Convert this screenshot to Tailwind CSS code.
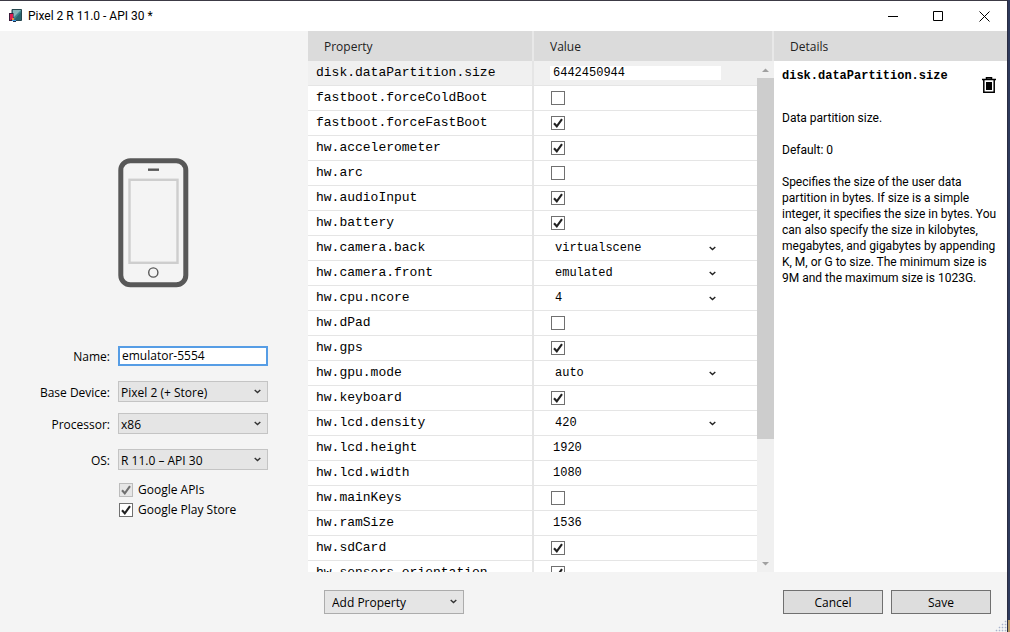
<!DOCTYPE html>
<html lang="en">
<head>
<meta charset="utf-8">
<title>Pixel 2 R 11.0 - API 30 *</title>
<script src="https://cdn.jsdelivr.net/npm/@tailwindcss/browser@4"></script>
</head>
<body class="flex h-screen overflow-hidden bg-[#2f3a5c] font-['Open_Sans','Noto_Sans',sans-serif] text-xs text-black">
<svg class="hidden">
  <symbol id="check" viewBox="0 0 14 14"><path d="M3 7.200 L5.800 10.300 L11 3.200" fill="none" stroke="currentColor" stroke-width="2.100"/></symbol>
  <symbol id="chevron" viewBox="0 0 7 5"><path d="M.7 1 L3.500 3.600 L6.300 1" fill="none" stroke="currentColor" stroke-width="1.400"/></symbol>
</svg>

<div class="flex min-w-0 flex-1 flex-col border-t border-[#3c3a45] bg-[#f4f4f4]">
  <header class="flex h-[30px] shrink-0 items-center bg-white pl-[9px]">
    <svg class="h-[14px] w-[13px]" viewBox="0 0 13 14">
      <path d="M3 .5h9.500v11H3z" fill="#3f858d" stroke="#26474f"/>
      <path d="M4 1h8L5 8H4z" fill="#86b5ba"/>
      <path d="M12 3v8H5z" fill="#2c6670"/>
      <path d="M0 4h4.500v8H0z" fill="#3a1d3b"/>
      <path d="M1 5h3v4L2 11H1z" fill="#e01e50"/>
      <path d="M3 9h2v2H3z" fill="#f08a3c"/>
      <path d="M3 11h4v1H3z" fill="#3e9be0"/>
      <path d="M4 12h3v1H4z" fill="#223049"/>
    </svg>
    <h1 class="ml-1.5 flex-1 font-[Roboto,sans-serif] whitespace-nowrap">Pixel 2 R 11.0 - API 30 *</h1>
    <button aria-label="Minimize" class="grid h-full w-[45px] place-items-center"><svg class="h-[11px] w-[11px]" viewBox="0 0 11 11"><path d="M0 5.500h10" stroke="#000"/></svg></button>
    <button aria-label="Maximize" class="grid h-full w-[45px] place-items-center"><svg class="h-[11px] w-[11px]" viewBox="0 0 11 11"><path d="M.5.5h9v9h-9z" fill="none" stroke="#000"/></svg></button>
    <button aria-label="Close" class="grid h-full w-[46px] place-items-center"><svg class="h-[11px] w-[11px]" viewBox="0 0 11 11"><path d="M.5.5l10 10M10.500.5l-10 10" stroke="#000"/></svg></button>
  </header>

  <div class="flex min-h-0 flex-1">
    <aside class="w-[308px] shrink-0 pt-[127px]">
      <svg class="ml-[118px] h-[130px] w-[71px]" viewBox="0 0 71 130">
        <rect x="2.800" y="2.800" width="65" height="124" rx="9.500" fill="none" stroke="#585858" stroke-width="5"/>
        <path d="M30 11.700h11" stroke="#585858" stroke-width="2.400"/>
        <rect x="11.500" y="21.800" width="48" height="83" fill="none" stroke="#cecece" stroke-width="2.400"/>
        <circle cx="35.300" cy="114.500" r="4.600" fill="none" stroke="#585858" stroke-width="1.400"/>
      </svg>
      <form class="mt-[58px]">
        <div class="flex h-5 items-center">
          <label for="name" class="w-[110px] pt-0.5 text-right">Name:</label>
          <input id="name" value="emulator-5554" class="ml-2 h-5 w-[150px] border-2 border-[#569de5] bg-white px-0.5 pb-0.5 outline-none">
        </div>
        <div class="mt-[15px] flex h-[21px] items-center">
          <label for="device" class="w-[110px] pt-0.5 text-right">Base Device:</label>
          <span class="relative ml-2"><select id="device" class="block h-[21px] w-[150px] appearance-none border border-[#c4c4c4] bg-[#e5e5e5] pt-0.5 pl-0.5"><option>Pixel 2 (+ Store)</option></select><svg class="pointer-events-none absolute top-2 right-[7px] h-[5px] w-[7px] text-[#333]"><use href="#chevron"/></svg></span>
        </div>
        <div class="mt-[11px] flex h-[21px] items-center">
          <label for="cpu" class="w-[110px] pt-0.5 text-right">Processor:</label>
          <span class="relative ml-2"><select id="cpu" class="block h-[21px] w-[150px] appearance-none border border-[#c4c4c4] bg-[#e5e5e5] pt-0.5 pl-0.5"><option>x86</option></select><svg class="pointer-events-none absolute top-2 right-[7px] h-[5px] w-[7px] text-[#333]"><use href="#chevron"/></svg></span>
        </div>
        <div class="mt-[15px] flex h-[21px] items-center">
          <label for="os" class="w-[110px] pt-0.5 text-right">OS:</label>
          <span class="relative ml-2"><select id="os" class="block h-[21px] w-[150px] appearance-none border border-[#c4c4c4] bg-[#e5e5e5] pt-0.5 pl-0.5"><option>R 11.0 – API 30</option></select><svg class="pointer-events-none absolute top-2 right-[7px] h-[5px] w-[7px] text-[#333]"><use href="#chevron"/></svg></span>
        </div>
        <label class="mt-2.5 ml-[119px] flex h-5 items-center gap-[5px]">
          <span class="grid"><input type="checkbox" checked disabled class="col-start-1 row-start-1 size-[14px] appearance-none border border-[#bcbcbc] bg-[#e6e6e6]"><svg class="pointer-events-none col-start-1 row-start-1 size-[14px] text-[#707070]"><use href="#check"/></svg></span>Google APIs</label>
        <label class="ml-[119px] flex h-5 items-center gap-[5px]">
          <span class="grid"><input type="checkbox" checked class="col-start-1 row-start-1 size-[14px] appearance-none border border-[#707070] bg-white"><svg class="pointer-events-none col-start-1 row-start-1 size-[14px] text-[#212121]"><use href="#check"/></svg></span>Google Play Store</label>
      </form>
    </aside>

    <div class="flex min-w-0 flex-1 flex-col">
      <div class="flex min-h-0 flex-1">
        <section class="flex w-[466px] shrink-0 flex-col bg-white">
          <div class="flex h-[30px] shrink-0 items-center bg-[#dbdbdb] text-[#222]">
            <div class="flex h-full w-[226px] items-center border-r-2 border-[#e8e8e8] pt-0.5 pl-4">Property</div>
            <div class="flex h-full flex-1 items-center border-r-2 border-[#e8e8e8] pt-0.5 pl-4">Value</div>
          </div>
          <div class="flex min-h-0 flex-1 overflow-hidden">
            <div class="min-w-0 flex-1 overflow-hidden">
              <table class="w-full table-fixed border-separate border-spacing-0 font-['Liberation_Mono',monospace]">
                <colgroup><col class="w-[226px]"><col></colgroup>
                <tbody id="rows"></tbody>
              </table>
            </div>
            <div class="flex w-[17px] flex-col items-center bg-[#f0f0f0]">
              <svg class="h-[17px] w-[17px] shrink-0" viewBox="0 0 17 17"><path d="M5 11L8.500 7.500 12 11z" fill="#a0a0a0"/></svg>
              <div class="h-[361px] w-full bg-[#cdcdcd]"></div>
              <svg class="mt-auto h-[17px] w-[17px] shrink-0" viewBox="0 0 17 17"><path d="M5 7L8.500 10.500 12 7z" fill="#a0a0a0"/></svg>
            </div>
          </div>
        </section>
        <section class="flex min-w-0 flex-1 flex-col bg-white">
          <h2 class="flex h-[30px] shrink-0 items-center bg-[#dbdbdb] pt-0.5 pl-4 text-[#222]">Details</h2>
          <div class="pt-[7px] pl-2 font-[Roboto,sans-serif] leading-4">
            <div class="flex justify-between pr-[11px]">
              <h3 class="font-['Liberation_Mono',monospace] font-bold">disk.dataPartition.size</h3>
              <button aria-label="Delete property" class="mt-[9px] h-4 w-3.5"><svg class="h-4 w-3.5" viewBox="0 0 14 16"><path d="M4.500 2V.7h5V2M0 2.500h14M1.800 3v12.200h10.400V3" fill="none" stroke="#000" stroke-width="1.500"/><path d="M4 5h6v8H4z"/></svg></button>
            </div>
            <p class="mt-[17px]">Data partition size.</p>
            <p class="mt-4">Default: 0</p>
            <p class="mt-4">Specifies the size of the user data<br>partition in bytes. If size is a simple<br>integer, it specifies the size in bytes. You<br>can also specify the size in kilobytes,<br>megabytes, and gigabytes by appending<br>K, M, or G to size. The minimum size is<br>9M and the maximum size is 1023G.</p>
          </div>
        </section>
      </div>
      <footer class="flex h-[60px] shrink-0 items-start pt-[18px] pl-4">
        <span class="relative mr-auto"><select aria-label="Add Property" class="block h-6 w-[140px] appearance-none border border-[#acacac] bg-[#e5e5e5] pt-0.5 pl-[7px]"><option>Add Property</option></select><svg class="pointer-events-none absolute top-[9px] right-[7px] h-[5px] w-[7px] text-[#333]"><use href="#chevron"/></svg></span>
        <button class="h-6 w-[100px] border border-[#707070] bg-[#dddddd] pt-0.5">Cancel</button>
        <button class="ml-2 h-6 w-[100px] border border-[#707070] bg-[#dddddd] pt-0.5">Save</button>
        <svg class="ml-1 h-3 w-3 self-end" viewBox="0 0 12 12"><path d="M10 1h1v1h-1zM7 4h1v1h-1zM10 4h1v1h-1zM4 7h1v1h-1zM7 7h1v1h-1zM10 7h1v1h-1zM1 10h1v1h-1zM4 10h1v1h-1zM7 10h1v1h-1zM10 10h1v1h-1z" fill="#a9b4cc" stroke="#a9b4cc" stroke-width=".5"/></svg>
      </footer>
    </div>
  </div>
</div>
<div class="flex w-[3px] shrink-0 flex-col justify-end border-l border-[#2a2c40]"><div class="h-3 bg-[#b89a62]"></div></div>

<script>
const props = [
  ['disk.dataPartition.size', 'edit', '6442450944'],
  ['fastboot.forceColdBoot', 'check', false],
  ['fastboot.forceFastBoot', 'check', true],
  ['hw.accelerometer', 'check', true],
  ['hw.arc', 'check', false],
  ['hw.audioInput', 'check', true],
  ['hw.battery', 'check', true],
  ['hw.camera.back', 'list', 'virtualscene'],
  ['hw.camera.front', 'list', 'emulated'],
  ['hw.cpu.ncore', 'list', '4'],
  ['hw.dPad', 'check', false],
  ['hw.gps', 'check', true],
  ['hw.gpu.mode', 'list', 'auto'],
  ['hw.keyboard', 'check', true],
  ['hw.lcd.density', 'list', '420'],
  ['hw.lcd.height', 'text', '1920'],
  ['hw.lcd.width', 'text', '1080'],
  ['hw.mainKeys', 'check', false],
  ['hw.ramSize', 'text', '1536'],
  ['hw.sdCard', 'check', true],
  ['hw.sensors.orientation', 'check', true],
];
const cell = {
  edit: (n, v) => `<input aria-label="${n}" value="${v}" class="ml-4 block h-[14px] w-[171px] bg-white pl-[3px] leading-[14px] outline-none">`,
  text: (n, v) => `<input aria-label="${n}" value="${v}" class="ml-4 block h-[14px] w-[171px] pl-[3px] leading-[14px] outline-none">`,
  list: (n, v) => `<span class="relative ml-4 block w-[171px]"><select aria-label="${n}" class="block h-4 w-full appearance-none pl-[5px] leading-4"><option>${v}</option></select><svg class="pointer-events-none absolute top-[6px] right-[5px] h-[5px] w-[7px] text-[#222]"><use href="#chevron"/></svg></span>`,
  check: (n, v) => `<span class="ml-[17px] grid w-[14px]"><input type="checkbox" aria-label="${n}" ${v ? 'checked' : ''} class="peer col-start-1 row-start-1 size-[14px] appearance-none border border-[#707070] bg-white"><svg class="pointer-events-none invisible col-start-1 row-start-1 size-[14px] text-[#212121] peer-checked:visible"><use href="#check"/></svg></span>`,
};
document.getElementById('rows').innerHTML = props.map(([n, t, v], i) =>
  `<tr class="${i ? 'bg-white' : 'bg-[#f0f0f0]'}"><th scope="row" class="h-[25px] border-r-2 border-b border-[#e5e5e5] p-0 pl-2 text-left text-[13px] leading-5 font-normal">${n}</th><td class="h-[25px] border-b border-[#e5e5e5] p-0">${cell[t](n, v)}</td></tr>`).join('');
</script>
</body>
</html>
